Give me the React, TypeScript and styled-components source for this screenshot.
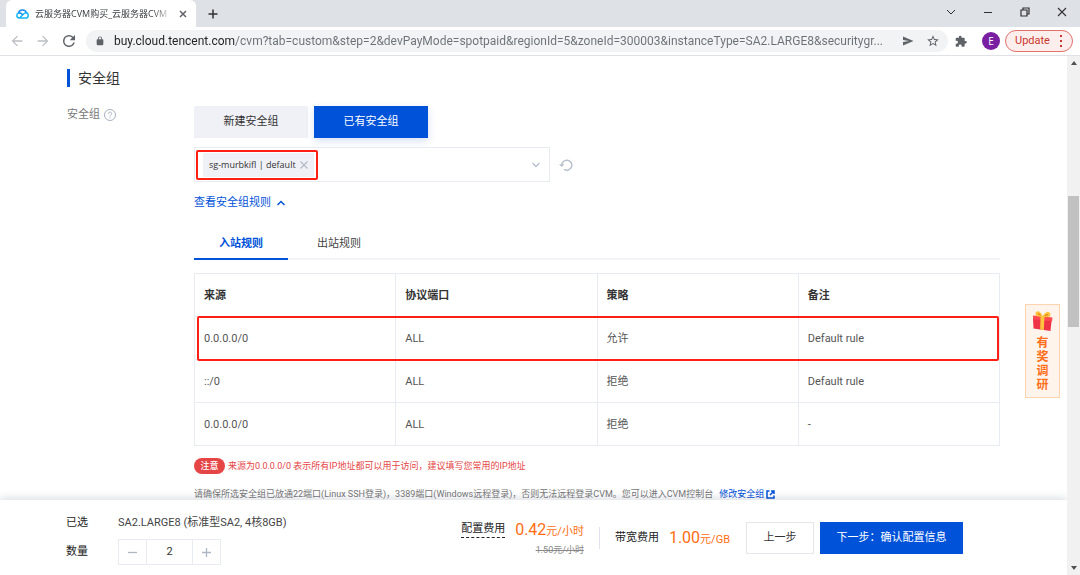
import React, { useState } from "react";
import styled, { createGlobalStyle } from "styled-components";

const blue = "#0052d9";
const red = "#ff1f14";
const line = "#e9ebf2";
const orange = "#ff6d12";
const pageFont = `Roboto, "Noto Sans CJK SC", sans-serif`;
const chromeFont = `"Open Sans", "Noto Sans CJK SC", sans-serif`;

const GlobalStyle = createGlobalStyle`
  * { box-sizing: border-box; }
  body { margin: 0; background: #fff; }
  button, input { font: inherit; color: inherit; border: 0; padding: 0; margin: 0; background: none; border-radius: 0; }
  button { cursor: pointer; }
  svg { display: block; flex: none; }
`;

const Window = styled.div`
  display: flex;
  flex-direction: column;
  height: 100vh;
  overflow: hidden;
  font: 11px/16px ${pageFont};
  color: #222;
`;

const TabStrip = styled.header`
  display: flex;
  align-items: center;
  flex: none;
  height: 27px;
  padding: 0 10px 0 6px;
  background: #dee1e6;
  font-family: ${chromeFont};
`;

const BrowserTab = styled.div`
  display: flex;
  align-items: center;
  align-self: stretch;
  width: 190px;
  padding: 0 9px 0 10px;
  border-radius: 6px 6px 0 0;
  background: #fff;
`;

const TabTitle = styled.span`
  flex: 1;
  min-width: 0;
  margin: 0 6px;
  white-space: nowrap;
  font-size: 9px;
  color: #3c4043;
  mask-image: linear-gradient(to right, #000 85%, transparent);
`;

const IconButton = styled.button<{ $w?: number }>`
  display: flex;
  align-items: center;
  justify-content: center;
  flex: none;
  width: ${(p) => p.$w ?? 16}px;
  height: 20px;
  color: #5f6368;
`;

const NavButton = styled(IconButton)`
  &:disabled { color: #bcbfc3; }
`;

const NewTab = styled(IconButton)`
  margin-left: 9px;
  color: #303134;
`;

const WindowControls = styled.div`
  display: flex;
  gap: 21px;
  margin-left: auto;
  margin-bottom: 4px;
  ${IconButton} { color: #303134; }
`;

const Toolbar = styled.div`
  display: flex;
  align-items: center;
  flex: none;
  height: 29px;
  padding: 0 7px 0 9px;
  border-bottom: 1px solid #dfe1e4;
  background: #fff;
  font-family: ${chromeFont};
`;

const NavButtons = styled.div`
  display: flex;
  gap: 10px;
  margin-right: 9px;
`;

const Omnibox = styled.label`
  display: flex;
  align-items: center;
  flex: 1;
  min-width: 0;
  height: 22px;
  padding: 0 7px 0 9px;
  gap: 9px;
  border-radius: 11px;
  background: #f1f3f4;
  color: #5f6368;
`;

const Address = styled.input`
  flex: 1;
  min-width: 0;
  font: 12px/16px Roboto, sans-serif;
  color: transparent;
  background: linear-gradient(to right, #202124 121px, #6c7075 121px);
  background-clip: text;
  outline: none;
`;

const Avatar = styled.button`
  width: 18px;
  height: 18px;
  margin: 0 5px 0 8px;
  border-radius: 50%;
  background: #7b1fa2;
  color: #fff;
  font-size: 10px;
  line-height: 18px;
`;

const Update = styled.button`
  display: flex;
  align-items: center;
  justify-content: space-between;
  width: 68px;
  height: 22px;
  padding: 0 6px 0 9px;
  border: 1px solid #e2716a;
  border-radius: 11px;
  background: #fceeed;
  color: #c9372c;
  font: 11px/16px Roboto, sans-serif;
`;

const Viewport = styled.div`
  display: flex;
  flex: 1;
  min-height: 0;
`;

const Page = styled.div`
  position: relative;
  display: flex;
  flex-direction: column;
  flex: 1;
  min-width: 0;
`;

const Content = styled.main`
  flex: 1;
  min-height: 0;
  overflow: hidden;
  padding: 13px 67px 0;
`;

const SectionTitle = styled.h2`
  margin: 0;
  padding-left: 8px;
  border-left: 3px solid ${blue};
  font-size: 14px;
  line-height: 18px;
  font-weight: 400;
  color: #333;
`;

const FormRow = styled.section`
  display: flex;
  margin-top: 19px;
`;

const FieldLabel = styled.div`
  display: flex;
  align-items: center;
  gap: 4px;
  flex: none;
  width: 127px;
  height: 18px;
  color: #777;
`;

const Field = styled.div`
  flex: 1;
  min-width: 0;
`;

const ButtonGroup = styled.div`
  display: flex;
  gap: 6px;
`;

const Choice = styled.button<{ $active?: boolean }>`
  width: 114px;
  height: 32px;
  background: ${(p) => (p.$active ? blue : "#f0f1f6")};
  color: ${(p) => (p.$active ? "#fff" : "#333")};
  box-shadow: ${(p) => (p.$active ? "0 3px 8px rgba(0, 60, 180, 0.16)" : "none")};
`;

const SelectRow = styled.div`
  display: flex;
  align-items: center;
  gap: 8px;
  margin-top: 9px;
`;

const SelectBox = styled.div`
  display: flex;
  align-items: center;
  justify-content: space-between;
  width: 356px;
  height: 35px;
  padding: 0 5px 0 1px;
  border: 1px solid ${line};
`;

const Marked = styled.div`
  padding: 1px 2px 1px 5px;
  border: 2px solid ${red};
  border-radius: 2px;
`;

const Chip = styled.span`
  display: flex;
  align-items: center;
  justify-content: space-between;
  width: 111px;
  height: 24px;
  padding: 0 4px 0 6px;
  background: #f0f1f6;
  font: 9px/16px "Open Sans", sans-serif;
  color: #333;
  white-space: nowrap;
`;

const Toggle = styled.button`
  display: flex;
  align-items: center;
  gap: 6px;
  height: 16px;
  margin-top: 13px;
  color: ${blue};
`;

const Tabs = styled.div`
  display: flex;
  gap: 4px;
  height: 34px;
  margin-top: 15px;
  border-bottom: 2px solid #f3f4f7;
`;

const TabButton = styled.button<{ $active?: boolean }>`
  height: 34px;
  padding: 4px 25px 0;
  border-bottom: 2px solid ${(p) => (p.$active ? blue : "transparent")};
  color: ${(p) => (p.$active ? blue : "#444")};
  font-weight: ${(p) => (p.$active ? 700 : 400)};
`;

const Rules = styled.table`
  width: 100%;
  margin-top: 13px;
  table-layout: fixed;
  border-collapse: collapse;
  th, td {
    height: 43px;
    padding: 2px 9px 0;
    border: 1px solid ${line};
    text-align: left;
    font-weight: 400;
    color: #555;
  }
  th { font-weight: 700; color: #333; }
`;

const RuleRow = styled.tr<{ $marked?: boolean }>`
  position: relative;
  td:first-child::after {
    content: ${(p) => (p.$marked ? '""' : "none")};
    position: absolute;
    inset: -1px 1px -1px 2px;
    border: 2px solid ${red};
    border-radius: 2px;
  }
`;

const Note = styled.p<{ $warn?: boolean }>`
  display: flex;
  align-items: center;
  gap: ${(p) => (p.$warn ? 3 : 6)}px;
  margin: 12px 0 0;
  font-size: 9px;
  line-height: 16px;
  color: ${(p) => (p.$warn ? "#e54545" : "#777")};
  white-space: nowrap;
`;

const Badge = styled.strong`
  width: 31px;
  border-radius: 8px;
  background: #e54545;
  color: #fff;
  font-weight: 500;
  text-align: center;
`;

const Link = styled.a`
  display: flex;
  align-items: center;
  gap: 2px;
  color: ${blue};
  text-decoration: none;
`;

const Footer = styled.footer`
  position: relative;
  display: flex;
  align-items: center;
  flex: none;
  height: 75px;
  padding: 0 104px 0 66px;
  background: #fff;
  box-shadow: 0 -2px 8px rgba(30, 50, 90, 0.16);
  white-space: nowrap;
  clip-path: inset(-10px 0 0 0);
`;

const Summary = styled.div`
  display: grid;
  grid-template-columns: 52px auto;
  row-gap: 8px;
  align-items: center;
  padding-top: 5px;
`;

const Spec = styled.span`
  color: #444;
`;

const Stepper = styled.div`
  display: flex;
  width: 103px;
  height: 26px;
  border: 1px solid ${line};
  color: #333;
`;

const StepButton = styled.button`
  display: flex;
  align-items: center;
  justify-content: center;
  width: 27px;
  color: #aeb6c4;
`;

const Quantity = styled.input`
  flex: 1;
  min-width: 0;
  border: solid ${line};
  border-width: 0 1px;
  text-align: center;
`;

const Costs = styled.div`
  display: flex;
  align-items: center;
  margin-left: auto;
`;

const Cost = styled.div`
  display: grid;
  grid-template-columns: auto auto;
  column-gap: 10px;
  align-items: center;
`;

const CostName = styled.span<{ $dashed?: boolean }>`
  border-bottom: ${(p) => (p.$dashed ? "1px dashed #222" : "0")};
`;

const Price = styled.span`
  padding-top: 3px;
  color: ${orange};
  line-height: 20px;
  b { font-size: 16px; font-weight: 400; }
`;

const OldPrice = styled.s`
  grid-column: 2;
  justify-self: end;
  font-size: 9px;
  color: #888;
`;

const Divider = styled.i`
  width: 1px;
  height: 22px;
  margin: 0 15px;
  background: #dfe3ec;
`;

const Actions = styled.div`
  display: flex;
  gap: 6px;
  margin-left: 16px;
`;

const Action = styled.button<{ $primary?: boolean }>`
  width: ${(p) => (p.$primary ? 143 : 68)}px;
  height: 32px;
  border: 1px solid ${(p) => (p.$primary ? blue : "#e5e7ec")};
  background: ${(p) => (p.$primary ? blue : "#fff")};
  color: ${(p) => (p.$primary ? "#fff" : "#333")};
`;

const Survey = styled.button`
  position: absolute;
  top: 248px;
  right: 7px;
  display: flex;
  flex-direction: column;
  align-items: center;
  gap: 5px;
  width: 35px;
  height: 94px;
  padding-top: 5px;
  border: 1px solid #ffd3ad;
  background: #fff4ec;
  color: #ff6f1a;
  font-size: 12px;
  line-height: 14px;
  font-weight: 700;
`;

const SurveyText = styled.span`
  width: 12px;
  word-break: break-all;
`;

const Scrollbar = styled.div`
  display: flex;
  flex-direction: column;
  align-items: center;
  flex: none;
  width: 13px;
  background: #f1f1f1;
`;

const ScrollTrack = styled.div`
  flex: 1;
  width: 11px;
  padding-top: 126px;
`;

const Thumb = styled.div`
  height: 131px;
  background: #c1c1c1;
`;

const ScrollArrow = styled.button`
  display: flex;
  align-items: center;
  justify-content: center;
  width: 13px;
  height: 14px;
`;

type IconProps = { d: string; size?: number; w?: number; box?: number; fill?: boolean };

function Icon({ d, size = 12, w = 1.5, box = 24, fill }: IconProps) {
  return (
    <svg
      width={size}
      height={size}
      viewBox={`0 0 ${box} ${box}`}
      fill={fill ? "currentColor" : "none"}
      stroke={fill ? "none" : "currentColor"}
      strokeWidth={w}
      aria-hidden="true"
    >
      <path d={d} />
    </svg>
  );
}

function CloudLogo() {
  return (
    <svg width="13" height="10" viewBox="0 0 26 20" fill="none" strokeWidth="3" strokeLinecap="round" strokeLinejoin="round">
      <path d="M5 8.500C5.500 4.500 9 2 13 2c4 0 7 2.500 8 6" stroke="#1489f0" />
      <path d="M5.500 8C3 8.500 1.800 10.600 1.800 13c0 2.800 2.200 5 5 5L17 8.500c1-.8 2.300-1 3.400-1 2.200 0 3.900 2.500 3.900 5.300 0 2.900-2.200 5.200-5 5.200H8" stroke="#15b6f5" />
      <path d="M7 8c2.500 0 4 1 5.500 2.400" stroke="#1489f0" />
    </svg>
  );
}

function Gift() {
  return (
    <svg width="21" height="21" viewBox="0 0 21 21">
      <path d="M1 5.500 20.500 7.500 20 11.500 1 9.500z" fill="#ff4a50" />
      <path d="M1 9 19.500 11 18.500 21 1.500 18.500z" fill="#ee3346" />
      <path d="M8.500 6h4l-.7 14-3.600-.5z" fill="#ffc43d" />
      <path d="M10.500 6.500C8 7 4 6.500 3.500 4.500S5 .5 7 1.500s3 3 3.500 5zM10.500 6.500c3 1 7.500 1 8-1S17 1 15 2s-3.500 2.500-4.500 4.500z" fill="#ffc43d" />
      <path d="M9.500 5.500C8 5.500 6 5 5.800 4.200S6.500 3 7.300 3.400zM11.800 6C14 6 16 5.800 16.200 5s-.7-1.200-1.700-.8z" fill="#e58b1e" />
    </svg>
  );
}

const rules = [
  { source: "0.0.0.0/0", port: "ALL", policy: "允许", remark: "Default rule", marked: true },
  { source: "::/0", port: "ALL", policy: "拒绝", remark: "Default rule" },
  { source: "0.0.0.0/0", port: "ALL", policy: "拒绝", remark: "-" },
];

const arrowLeft = "M20 11H7.830l5.590-5.590L12 4l-8 8 8 8 1.410-1.410L7.830 13H20v-2z";
const arrowRight = "M4 11h12.170l-5.590-5.590L12 4l8 8-8 8-1.410-1.410L16.170 13H4v-2z";
const reload =
  "M17.650 6.350A7.960 7.960 0 0 0 12 4a8 8 0 1 0 7.730 10h-2.080A6 6 0 1 1 12 6c1.660 0 3.140.69 4.220 1.780L13 11h7V4l-2.350 2.350z";
const lock =
  "M18 8h-1V6A5 5 0 0 0 7 6v2H6a2 2 0 0 0-2 2v10c0 1.100.9 2 2 2h12a2 2 0 0 0 2-2V10a2 2 0 0 0-2-2zM9 6a3 3 0 0 1 6 0v2H9V6z";
const star =
  "M22 9.240l-7.190-.62L12 2 9.190 8.630 2 9.240l5.460 4.730L5.820 21 12 17.270 18.180 21l-1.630-7.030L22 9.240zM12 15.400l-3.760 2.270 1-4.280-3.320-2.880 4.380-.38L12 6.100l1.710 4.040 4.380.38-3.320 2.880 1 4.280L12 15.400z";
const send = "M2 21l21-9L2 3v7l12 2-12 2v7z";
const puzzle =
  "M20.500 11H19V7a2 2 0 0 0-2-2h-4V3.500a2.500 2.500 0 0 0-5 0V5H4a2 2 0 0 0-2 2v3.800h1.500a2.700 2.700 0 0 1 0 5.400H2V20c0 1.100.9 2 2 2h3.800v-1.500a2.700 2.700 0 0 1 5.400 0V22H17a2 2 0 0 0 2-2v-4h1.500a2.500 2.500 0 0 0 0-5z";

export default function App() {
  const [quantity, setQuantity] = useState(2);
  return (
    <Window>
      <GlobalStyle />
      <TabStrip>
        <BrowserTab>
          <CloudLogo />
          <TabTitle>云服务器CVM购买_云服务器CVM</TabTitle>
          <IconButton $w={8} aria-label="Close tab">
            <Icon size={8} box={8} w={1.5} d="M1 1l6 6M7 1L1 7" />
          </IconButton>
        </BrowserTab>
        <NewTab aria-label="New tab">
          <Icon size={10} box={10} w={1.5} d="M5 0.500v9M0.500 5h9" />
        </NewTab>
        <WindowControls>
          <IconButton aria-label="Search tabs">
            <Icon size={10} box={10} w={1} d="M1 3l4 4 4-4" />
          </IconButton>
          <IconButton aria-label="Minimize">
            <Icon size={10} box={10} w={1} d="M1 5.500h8" />
          </IconButton>
          <IconButton aria-label="Restore">
            <Icon size={10} box={10} w={1.2} d="M1 3h6v6H1zM3 3V1h6v6H7" />
          </IconButton>
          <IconButton aria-label="Close">
            <Icon size={10} box={10} w={1.1} d="M1 1l8 8M9 1L1 9" />
          </IconButton>
        </WindowControls>
      </TabStrip>

      <Toolbar>
        <NavButtons>
          <NavButton aria-label="Back" disabled>
            <Icon size={16} fill d={arrowLeft} />
          </NavButton>
          <NavButton aria-label="Forward" disabled>
            <Icon size={16} fill d={arrowRight} />
          </NavButton>
          <NavButton aria-label="Reload">
            <Icon size={18} fill d={reload} />
          </NavButton>
        </NavButtons>
        <Omnibox>
          <Icon size={10} fill d={lock} />
          <Address
            aria-label="Address"
            defaultValue="buy.cloud.tencent.com/cvm?tab=custom&step=2&devPayMode=spotpaid&regionId=5&zoneId=300003&instanceType=SA2.LARGE8&securitygr..."
          />
          <IconButton aria-label="Share">
            <Icon size={12} fill d={send} />
          </IconButton>
          <IconButton aria-label="Bookmark">
            <Icon size={14} fill d={star} />
          </IconButton>
        </Omnibox>
        <IconButton $w={26} aria-label="Extensions">
          <svg width="18" height="13" viewBox="-5 0 34 24" fill="currentColor"><path d={puzzle} /></svg>
        </IconButton>
        <Avatar>E</Avatar>
        <Update>
          Update
          <Icon size={12} box={12} fill d="M6 0h2v2H6zM6 5h2v2H6zM6 10h2v2H6z" />
        </Update>
      </Toolbar>

      <Viewport>
        <Page>
          <Content>
            <SectionTitle>安全组</SectionTitle>
            <FormRow>
              <FieldLabel>
                安全组
                <svg width="12" height="12" viewBox="0 0 12 12" fill="none" stroke="#a9b1bf">
                  <circle cx="6" cy="6" r="5.500" />
                  <path d="M4.300 4.800C4.300 2.600 7.700 2.600 7.700 4.700 7.700 5.900 6 5.900 6 7.300M6 8.200v1.100" />
                </svg>
              </FieldLabel>
              <Field>
                <ButtonGroup>
                  <Choice>新建安全组</Choice>
                  <Choice $active>已有安全组</Choice>
                </ButtonGroup>
                <SelectRow>
                  <SelectBox>
                    <Marked>
                      <Chip>
                        sg-murbkifl | default
                        <IconButton $w={12} aria-label="Remove">
                          <svg width="8" height="8" viewBox="0 0 8 8" stroke="#b4bac6" strokeWidth="1.300"><path d="M.5.5l7 7M7.500.5l-7 7" /></svg>
                        </IconButton>
                      </Chip>
                    </Marked>
                    <IconButton aria-label="Open list">
                      <svg width="8" height="8" viewBox="0 0 8 8" fill="none" stroke="#b9c0cd" strokeWidth="1.400"><path d="M.5 2L4 5.500 7.500 2" /></svg>
                    </IconButton>
                  </SelectBox>
                  <IconButton aria-label="Refresh">
                    <svg width="14" height="14" viewBox="0 0 14 14" fill="none" stroke="#b9c0cd" strokeWidth="1.500">
                      <path d="M2.800 7.500A5 5 0 1 1 5 11.300" />
                      <path d="M0 6.300h5.400L2.700 9z" fill="#b9c0cd" stroke="none" />
                    </svg>
                  </IconButton>
                </SelectRow>
                <Toggle>
                  查看安全组规则
                  <Icon size={8} box={8} w={1.5} d="M.5 6L4 2.500 7.500 6" />
                </Toggle>
                <Tabs role="tablist">
                  <TabButton role="tab" aria-selected $active>入站规则</TabButton>
                  <TabButton role="tab">出站规则</TabButton>
                </Tabs>
                <Rules>
                  <thead>
                    <tr>
                      <th>来源</th>
                      <th>协议端口</th>
                      <th>策略</th>
                      <th>备注</th>
                    </tr>
                  </thead>
                  <tbody>
                    {rules.map((rule, i) => (
                      <RuleRow key={i} $marked={rule.marked}>
                        <td>{rule.source}</td>
                        <td>{rule.port}</td>
                        <td>{rule.policy}</td>
                        <td>{rule.remark}</td>
                      </RuleRow>
                    ))}
                  </tbody>
                </Rules>
                <Note $warn>
                  <Badge>注意</Badge>
                  来源为0.0.0.0/0 表示所有IP地址都可以用于访问，建议填写您常用的IP地址
                </Note>
                <Note>
                  请确保所选安全组已放通22端口(Linux SSH登录)，3389端口(Windows远程登录)，否则无法远程登录CVM。您可以进入CVM控制台
                  <Link href="#security-group">
                    修改安全组
                    <svg width="9" height="9" viewBox="0 0 9 9" fill="none" stroke="currentColor" strokeWidth="1.500">
                      <path d="M3.500 1H1v7h7V5.500M5 1h3v3M8 1L4 5" />
                    </svg>
                  </Link>
                </Note>
              </Field>
            </FormRow>
          </Content>

          <Footer>
            <Summary>
              <span>已选</span>
              <Spec>SA2.LARGE8 (标准型SA2, 4核8GB)</Spec>
              <label htmlFor="quantity">数量</label>
              <Stepper>
                <StepButton aria-label="Decrease" onClick={() => setQuantity(Math.max(1, quantity - 1))}>
                  <Icon size={9} box={9} w={1.3} d="M0 4.500h9" />
                </StepButton>
                <Quantity
                  id="quantity"
                  value={quantity}
                  onChange={(e) => setQuantity(Number(e.target.value) || 1)}
                />
                <StepButton aria-label="Increase" onClick={() => setQuantity(quantity + 1)}>
                  <Icon size={9} box={9} w={1.3} d="M0 4.500h9M4.500 0v9" />
                </StepButton>
              </Stepper>
            </Summary>
            <Costs>
              <Cost>
                <CostName $dashed>配置费用</CostName>
                <Price><b>0.42</b>元/小时</Price>
                <OldPrice>1.50元/小时</OldPrice>
              </Cost>
              <Divider />
              <Cost>
                <CostName>带宽费用</CostName>
                <Price><b>1.00</b>元/GB</Price>
              </Cost>
              <Actions>
                <Action>上一步</Action>
                <Action $primary>下一步：确认配置信息</Action>
              </Actions>
            </Costs>
          </Footer>

          <Survey>
            <Gift />
            <SurveyText>有奖调研</SurveyText>
          </Survey>
        </Page>
        <Scrollbar>
          <ScrollArrow aria-label="Scroll up">
            <svg width="6" height="4" viewBox="0 0 6 4" fill="#505050"><path d="M0 4l3-4 3 4z" /></svg>
          </ScrollArrow>
          <ScrollTrack>
            <Thumb />
          </ScrollTrack>
          <ScrollArrow aria-label="Scroll down">
            <svg width="6" height="4" viewBox="0 0 6 4" fill="#505050"><path d="M0 0l3 4 3-4z" /></svg>
          </ScrollArrow>
        </Scrollbar>
      </Viewport>
    </Window>
  );
}
